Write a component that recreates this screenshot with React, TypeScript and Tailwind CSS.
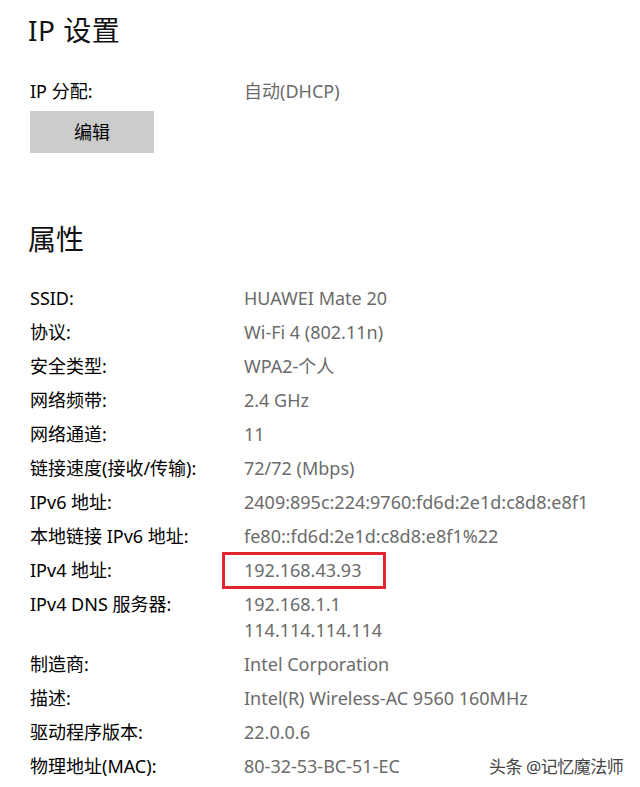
import React from "react";

const font = { fontFamily: '"Noto Sans", "Noto Sans CJK SC", sans-serif' };

const rows: [string, string[]][] = [
  ["SSID:", ["HUAWEI Mate 20"]],
  ["协议:", ["Wi-Fi 4 (802.11n)"]],
  ["安全类型:", ["WPA2-个人"]],
  ["网络频带:", ["2.4 GHz"]],
  ["网络通道:", ["11"]],
  ["链接速度(接收/传输):", ["72/72 (Mbps)"]],
  ["IPv6 地址:", ["2409:895c:224:9760:fd6d:2e1d:c8d8:e8f1"]],
  ["本地链接 IPv6 地址:", ["fe80::fd6d:2e1d:c8d8:e8f1%22"]],
  ["IPv4 地址:", ["192.168.43.93"]],
  ["IPv4 DNS 服务器:", ["192.168.1.1", "114.114.114.114"]],
  ["制造商:", ["Intel Corporation"]],
  ["描述:", ["Intel(R) Wireless-AC 9560 160MHz"]],
  ["驱动程序版本:", ["22.0.0.6"]],
  ["物理地址(MAC):", ["80-32-53-BC-51-EC"]],
];

export default function App() {
  return (
    <div className="relative w-[640px] h-[787px] bg-white overflow-hidden" style={font}>
      <div className="pl-[28px] pt-[11px] flex flex-col">
        <div className="text-[28px] leading-[38px] text-[#111] tracking-[0.5px]">IP 设置</div>
        <div className="mt-[29px] flex text-[18px] leading-[26px]">
          <div className="w-[216px] pl-[2px] text-black">IP 分配:</div>
          <div className="text-[#6b6b6b]">自动(DHCP)</div>
        </div>
        <button className="mt-[7px] ml-[2px] w-[124px] h-[42px] bg-[#cccccc] text-[18px] text-black">编辑</button>
        <div className="mt-[67px] text-[28px] leading-[38px] text-[#111]">属性</div>
        <div className="mt-[27px] flex flex-col gap-[8px] text-[18px] leading-[26px]">
          {rows.map(([label, vals]) => (
            <div key={label} className="flex">
              <div className="w-[216px] pl-[2px] text-black shrink-0">{label}</div>
              <div className="flex flex-col text-[#6b6b6b]">
                {vals.map((v) =>
                  label === "IPv4 地址:" ? (
                    <div key={v} className="relative">
                      {v}
                      <div className="absolute left-[-22px] top-[-5px] w-[164px] h-[37px] border-[3px] border-[#e0252f]" />
                    </div>
                  ) : (
                    <div key={v}>{v}</div>
                  )
                )}
              </div>
            </div>
          ))}
        </div>
      </div>
      <div className="absolute left-[489px] top-[755px] text-[17px] leading-[24px] text-[#444] tracking-[-0.5px]">头条 @记忆魔法师</div>
    </div>
  );
}
